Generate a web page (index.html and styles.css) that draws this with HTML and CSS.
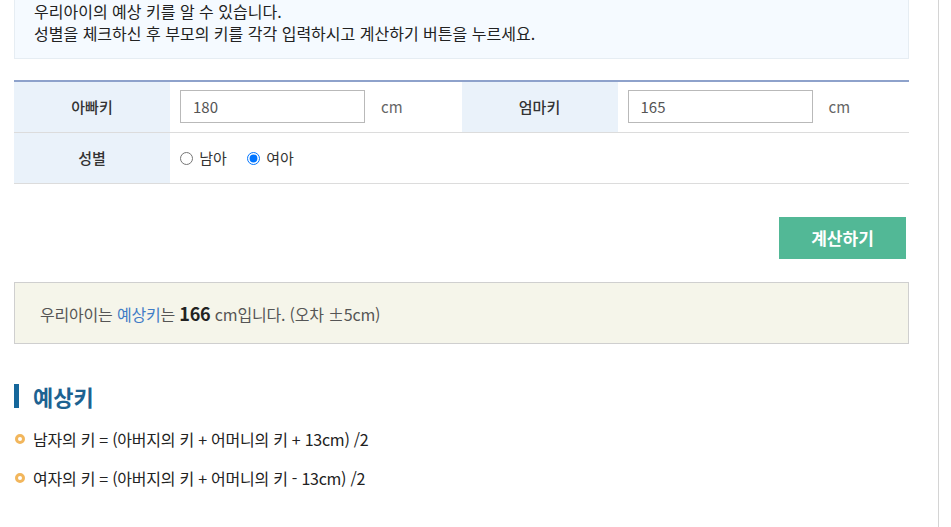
FILE: index.html
```html
<!DOCTYPE html>
<html lang="ko">
<head>
    <meta charset="utf-8" />
    <title>예상 키 계산기</title>
    <link rel="stylesheet" href="styles.css">
</head>
<body>
<div class="wrap">
    <div class="content">
        <div class="info">
            <p>우리아이의 예상 키를 알 수 있습니다.</p>
            <p>성별을 체크하신 후 부모의 키를 각각 입력하시고 계산하기 버튼을 누르세요.</p>
        </div>

        <table class="calc">
            <colgroup>
                <col class="c-th" />
                <col class="c-td" />
                <col class="c-th" />
                <col class="c-td" />
            </colgroup>
            <tr>
                <th>아빠키</th>
                <td><input type="text" class="txt" value="180" /><span class="unit">cm</span></td>
                <th>엄마키</th>
                <td><input type="text" class="txt" value="165" /><span class="unit">cm</span></td>
            </tr>
            <tr>
                <th>성별</th>
                <td colspan="3">
                    <label class="radio"><input type="radio" name="sex" /> 남아</label>
                    <label class="radio"><input type="radio" name="sex" checked /> 여아</label>
                </td>
            </tr>
        </table>

        <div class="btns">
            <button type="button" class="btn">계산하기</button>
        </div>

        <div class="result">
            우리아이는 <em>예상키</em>는 <strong>166</strong> cm입니다. (오차 ±5cm)
        </div>

        <h3 class="tit">예상키</h3>
        <ul class="formula">
            <li>남자의 키 = (아버지의 키 + 어머니의 키 + 13cm) /2</li>
            <li>여자의 키 = (아버지의 키 + 어머니의 키 - 13cm) /2</li>
        </ul>
    </div>
</div>
</body>
</html>
```

FILE: styles.css
```css
* { padding: 0; margin: 0; box-sizing: border-box; }
li { list-style: none; }
body { background: #fff; color: #333; font-family: "Noto Sans CJK KR", "Noto Sans", sans-serif; font-size: 15px; }

.wrap { width: 939px; min-height: 527px; border-right: 1px solid #d4d4d4; }
.content { width: 895px; margin-left: 14px; }

.info { background: #f5faff; border: 1px solid #e6edf3; border-top: none; padding: 0 19px 14px; line-height: 22px; font-size: 16px; color: #222; }

.calc { width: 100%; margin-top: 21px; border-collapse: collapse; table-layout: fixed; border-top: 2px solid #8ea2cb; }
.calc .c-th { width: 156px; }
.calc th { height: 51px; background: #eaf2fa; font-weight: 500; color: #333; border-bottom: 1px solid #dcdcdc; }
.calc td { height: 51px; padding-left: 10px; border-bottom: 1px solid #dcdcdc; }
.calc .txt { width: 185px; height: 33px; border: 1px solid #b9b9b9; padding: 0 12px; font-family: inherit; font-size: 15px; color: #555; vertical-align: middle; }
.calc .unit { margin-left: 16px; color: #666; vertical-align: middle; }
.radio { margin-right: 16px; color: #333; }
.radio input { width: 13px; height: 13px; margin: 0 2px 0 0; vertical-align: -1px; }

.btns { display: flex; justify-content: flex-end; margin-top: 33px; padding-right: 3px; }
.btn { width: 127px; height: 42px; border: none; background: #52b896; color: #fff; font-family: inherit; font-size: 17px; font-weight: 700; }

.result { margin-top: 23px; height: 62px; padding: 0 25px; line-height: 60px; background: #f5f5ea; border: 1px solid #cfcfcf; color: #555; font-size: 16px; letter-spacing: -0.2px; }
.result em { font-style: normal; color: #3f7cc6; }
.result strong { font-size: 18px; font-weight: 700; color: #222; }

.tit { margin-top: 40px; display: flex; align-items: center; height: 24px; border-left: 5px solid #15679b; padding-left: 14px; font-size: 22px; font-weight: 700; color: #1d6291; }

.formula { margin-top: 20px; }
.formula li { position: relative; height: 39px; line-height: 22px; padding-left: 19px; font-size: 16px; color: #222; letter-spacing: -0.25px; }
.formula li:before { content: ""; position: absolute; left: 1px; top: 6px; width: 10px; height: 10px; box-sizing: border-box; border: 3px solid #f2b65c; border-radius: 50%; }
```
